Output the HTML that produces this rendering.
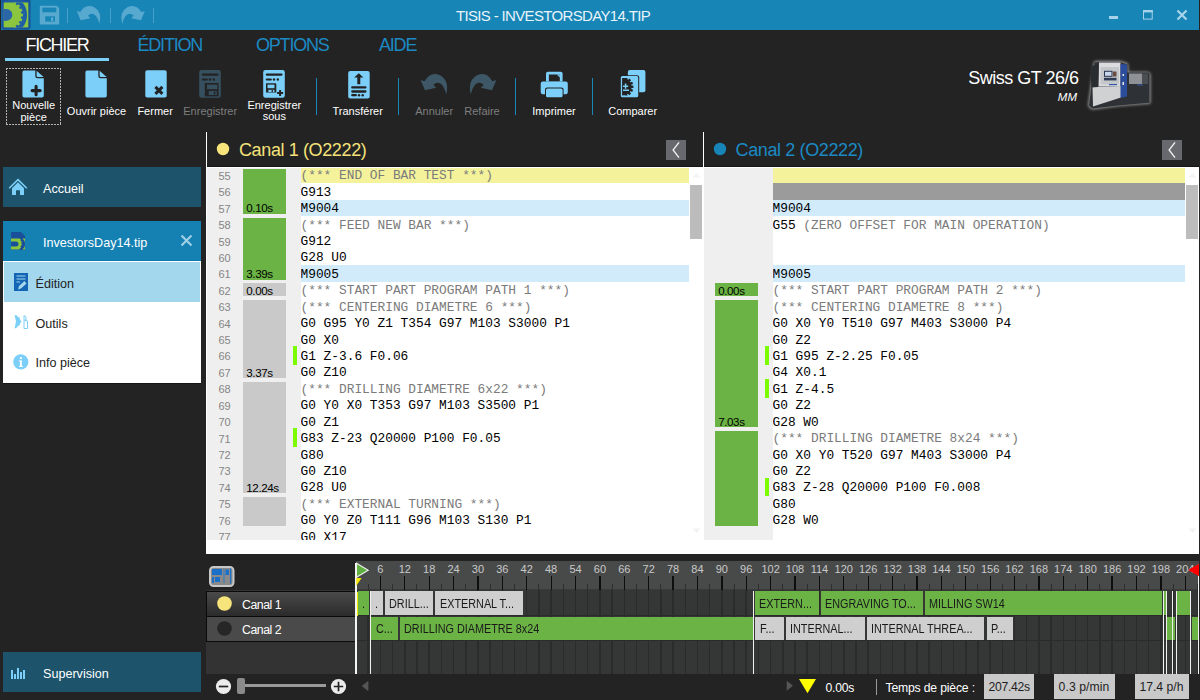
<!DOCTYPE html>
<html><head><meta charset="utf-8"><style>
html,body{margin:0;padding:0;}
body{width:1200px;height:700px;overflow:hidden;background:#232323;position:relative;font-family:'Liberation Sans', sans-serif;}
body>div{position:absolute;}
</style></head><body>
<div style="left:0px;top:0px;width:1200px;height:30px;background:#1785b6;"></div>
<div style="left:0px;top:0px;width:1px;height:30px;background:#232323;"></div>
<svg style="position:absolute;left:0px;top:0px;" width="32" height="30" viewBox="0 0 32 30">
<defs><radialGradient id="lg" cx="0.45" cy="0.5" r="0.6"><stop offset="0" stop-color="#2f6fb3"/><stop offset="1" stop-color="#17539a"/></radialGradient>
<clipPath id="lc"><rect x="3.7" y="2.5" width="24.6" height="24.9"/></clipPath></defs>
<rect x="1.4" y="-2" width="29.2" height="31.7" rx="3.5" fill="url(#lg)"/>
<rect x="3.7" y="2.5" width="24.6" height="24.9" fill="#8cc63f"/>
<g clip-path="url(#lc)">
<circle cx="7.7" cy="15" r="16.4" fill="none" stroke="#1f5fa4" stroke-width="5.9"/>
<rect x="12.8" y="-1.4" width="2.4" height="2.8" fill="#8cc63f" transform="translate(7.7 15) rotate(-60)"/><rect x="12.8" y="-1.4" width="2.4" height="2.8" fill="#8cc63f" transform="translate(7.7 15) rotate(-40)"/><rect x="12.8" y="-1.4" width="2.4" height="2.8" fill="#8cc63f" transform="translate(7.7 15) rotate(-20)"/><rect x="12.8" y="-1.4" width="2.4" height="2.8" fill="#8cc63f" transform="translate(7.7 15) rotate(0)"/><rect x="12.8" y="-1.4" width="2.4" height="2.8" fill="#8cc63f" transform="translate(7.7 15) rotate(20)"/><rect x="12.8" y="-1.4" width="2.4" height="2.8" fill="#8cc63f" transform="translate(7.7 15) rotate(40)"/><rect x="12.8" y="-1.4" width="2.4" height="2.8" fill="#8cc63f" transform="translate(7.7 15) rotate(60)"/>
<rect x="0" y="9.1" width="6.5" height="11.7" fill="#2a66a8"/><circle cx="6.5" cy="14.95" r="5.85" fill="#2a66a8"/>
</g>
</svg>
<svg style="position:absolute;left:39px;top:5px;" width="22" height="20" viewBox="0 0 22 20">
<path d="M1.4 1.4 H17.6 L19.6 3.4 V18.9 H1.4 Z" fill="#58a9cf" stroke="#58a9cf" stroke-width="1.2" stroke-linejoin="round"/>
<rect x="3.3" y="2.6" width="14" height="4.7" fill="#1785b6"/>
<rect x="6.2" y="11.3" width="9.8" height="5.3" fill="#1785b6"/>
<rect x="12" y="12.5" width="2.3" height="3.5" fill="#58a9cf"/></svg>
<div style="left:67.2px;top:8.2px;width:1px;height:14.5px;background:#4a9fc8;"></div>
<div style="left:110.2px;top:8.2px;width:1px;height:14.5px;background:#4a9fc8;"></div>
<div style="left:153.2px;top:8.2px;width:1px;height:14.5px;background:#4a9fc8;"></div>
<svg style="position:absolute;left:0px;top:0px;" width="200" height="30" viewBox="0 0 200 30"><path d="M32.2 26.5 Q36 13 26 7 Q16.5 2.6 10.6 12.8 L6.6 11.5 L11 22.3 L22.2 19.8 L19.3 17 Q22.5 13.3 26.8 15.8 Q30.5 19 32.2 26.5 Z" fill="#58a9cf" transform="translate(70.9 1.1) scale(0.885 0.86)"/><path d="M32.2 26.5 Q36 13 26 7 Q16.5 2.6 10.6 12.8 L6.6 11.5 L11 22.3 L22.2 19.8 L19.3 17 Q22.5 13.3 26.8 15.8 Q30.5 19 32.2 26.5 Z" fill="#58a9cf" transform="translate(150.7 1.1) scale(-0.885 0.86)"/></svg>
<div style="left:456.00px;top:8.25px;font-size:15px;line-height:15px;color:#e8f4fa;font-family:'Liberation Sans', sans-serif;white-space:pre;letter-spacing:-0.66px">TISIS - INVESTORSDAY14.TIP</div>
<div style="left:1108.8px;top:16px;width:9.2px;height:3px;background:#a6d3ea;"></div>
<svg style="position:absolute;left:1142px;top:9px;" width="12" height="11" viewBox="0 0 12 11"><rect x="1.5" y="1.5" width="8.7" height="8.6" fill="none" stroke="#a6d3ea" stroke-width="1"/><rect x="1" y="1" width="9.7" height="2.4" fill="#a6d3ea"/></svg>
<svg style="position:absolute;left:1176px;top:9px;" width="12" height="12" viewBox="0 0 12 12"><path d="M1.5 1.5 L10.5 10.5 M10.5 1.5 L1.5 10.5" stroke="#a6d3ea" stroke-width="2.3"/></svg>
<div style="left:25.50px;top:35.70px;font-size:18px;line-height:18px;color:#ffffff;font-family:'Liberation Sans', sans-serif;white-space:pre;letter-spacing:-1.3px">FICHIER</div>
<div style="left:5px;top:58px;width:104px;height:3px;background:#7ccff6;"></div>
<div style="left:137.50px;top:35.70px;font-size:18px;line-height:18px;color:#1b8ac4;font-family:'Liberation Sans', sans-serif;white-space:pre;letter-spacing:-1.2px">ÉDITION</div>
<div style="left:256.00px;top:35.70px;font-size:18px;line-height:18px;color:#1b8ac4;font-family:'Liberation Sans', sans-serif;white-space:pre;letter-spacing:-1.2px">OPTIONS</div>
<div style="left:379.00px;top:35.70px;font-size:18px;line-height:18px;color:#1b8ac4;font-family:'Liberation Sans', sans-serif;white-space:pre;letter-spacing:-1.2px">AIDE</div>
<div style="left:6px;top:68px;width:55px;height:1px;background:repeating-linear-gradient(90deg,#b4b4b4 0 2px,transparent 2px 3px);"></div>
<div style="left:6px;top:124px;width:55px;height:1px;background:repeating-linear-gradient(90deg,#b4b4b4 0 2px,transparent 2px 3px);"></div>
<div style="left:6px;top:68px;width:1px;height:57px;background:repeating-linear-gradient(180deg,#b4b4b4 0 2px,transparent 2px 3px);"></div>
<div style="left:60px;top:68px;width:1px;height:57px;background:repeating-linear-gradient(180deg,#b4b4b4 0 2px,transparent 2px 3px);"></div>
<svg style="position:absolute;left:22.3px;top:70.4px;" width="23" height="29" viewBox="0 0 23 29">
<path d="M2 0.5 H13.3 V6 Q13.3 8.3 15.6 8.3 H21.8 V25.8 Q21.8 27.6 20 27.6 H2.2 Q0.4 27.6 0.4 25.8 V2.3 Q0.4 0.5 2 0.5 Z" fill="#7ccff8"/>
<path d="M14.6 0.8 L21.6 7 H15.8 Q14.6 7 14.6 5.8 Z" fill="#7ccff8"/></svg>
<svg style="position:absolute;left:22.3px;top:70.4px;" width="23" height="29" viewBox="0 0 23 29"><path d="M10.1 20.6 H18.2 M14.1 16.4 V24.7" stroke="#232323" stroke-width="3.1" stroke-linecap="round"/></svg>
<svg style="position:absolute;left:85.3px;top:70.4px;" width="23" height="29" viewBox="0 0 23 29">
<path d="M2 0.5 H13.3 V6 Q13.3 8.3 15.6 8.3 H21.8 V25.8 Q21.8 27.6 20 27.6 H2.2 Q0.4 27.6 0.4 25.8 V2.3 Q0.4 0.5 2 0.5 Z" fill="#7ccff8"/>
<path d="M14.6 0.8 L21.6 7 H15.8 Q14.6 7 14.6 5.8 Z" fill="#7ccff8"/></svg>
<svg style="position:absolute;left:144.5px;top:70.4px;" width="23" height="29" viewBox="0 0 23 29"><rect x="0.3" y="0.2" width="21.4" height="27.3" rx="1.8" fill="#7ccff8"/>
<path d="M10.4 16.9 L17.4 23.9 M17.4 16.9 L10.4 23.9" stroke="#232323" stroke-width="3"/></svg>
<svg style="position:absolute;left:199px;top:70.1px;" width="23" height="29" viewBox="0 0 23 29"><rect x="0.2" y="0" width="21.6" height="27.8" rx="2.2" fill="#36505f"/>
<path d="M3.8 4.6 H18.5" stroke="#232323" stroke-width="2.2" stroke-linecap="round"/>
<path d="M3.8 9.5 H7.8" stroke="#232323" stroke-width="2.2" stroke-linecap="round"/>
<circle cx="11" cy="9.5" r="1.2" fill="#232323"/><circle cx="14.8" cy="9.5" r="1.2" fill="#232323"/><path d="M5.8 13 H19.6 V26.4 H5.8 Z" fill="#232323"/>
<rect x="8" y="14.6" width="10.3" height="4.6" fill="#36505f"/>
<rect x="9.8" y="21" width="8" height="4" fill="#36505f"/>
<rect x="14.8" y="21.6" width="1.6" height="2.8" fill="#232323"/></svg>
<svg style="position:absolute;left:263px;top:70.1px;" width="23" height="29" viewBox="0 0 23 29"><rect x="0.2" y="0" width="21.6" height="27.8" rx="2.2" fill="#7ccff8"/>
<path d="M3.8 4.6 H18.5" stroke="#232323" stroke-width="2.2" stroke-linecap="round"/>
<path d="M3.8 9.5 H7.8" stroke="#232323" stroke-width="2.2" stroke-linecap="round"/>
<circle cx="11" cy="9.5" r="1.2" fill="#232323"/><circle cx="14.8" cy="9.5" r="1.2" fill="#232323"/><path d="M3 13.2 H12.6 L13.3 14 V22.6 H3 Z" fill="#232323"/>
<rect x="4.5" y="14.6" width="7" height="3.6" fill="#7ccff8"/>
<rect x="5.4" y="19.8" width="6" height="2.2" fill="#7ccff8"/>
<rect x="8.6" y="19.8" width="1.3" height="2.2" fill="#232323"/>
<path d="M17.1 19.9 V25.9 M14.1 22.9 H20.1" stroke="#232323" stroke-width="2"/></svg>
<div style="left:316px;top:78px;width:1px;height:37px;background:#1b87b7;"></div>
<div style="left:398px;top:78px;width:1px;height:37px;background:#1b87b7;"></div>
<div style="left:515px;top:78px;width:1px;height:37px;background:#1b87b7;"></div>
<div style="left:592px;top:78px;width:1px;height:37px;background:#1b87b7;"></div>
<svg style="position:absolute;left:347.6px;top:70.5px;" width="23" height="29" viewBox="0 0 23 29"><rect x="0.2" y="0.1" width="21.5" height="27.4" rx="2" fill="#7ccff8"/>
<path d="M10.8 2.3 L15.4 6.4 H12.3 V13.2 H9.3 V6.4 H6.2 Z" fill="#232323"/>
<path d="M4.3 16.4 H17.4 M4.3 20.5 H17.4" stroke="#232323" stroke-width="2.3" stroke-linecap="round"/>
<path d="M4.3 24.2 H7.8" stroke="#232323" stroke-width="2.2" stroke-linecap="round"/>
<circle cx="11" cy="24.2" r="1.2" fill="#232323"/><circle cx="14.7" cy="24.2" r="1.2" fill="#232323"/></svg>
<svg style="position:absolute;left:414px;top:68px;" width="40" height="32" viewBox="0 0 40 32"><path d="M32.2 26.5 Q35.8 13 26 7.3 Q16.5 3 10.6 13.3 L6.6 12 L11 22.3 L22.2 19.8 L19.3 17 Q22.5 13.3 26.8 15.8 Q30.5 19 32.2 26.5 Z" fill="#3d5766"/></svg>
<svg style="position:absolute;left:462.8px;top:68px;" width="40" height="32" viewBox="0 0 40 32"><path d="M32.2 26.5 Q35.8 13 26 7.3 Q16.5 3 10.6 13.3 L6.6 12 L11 22.3 L22.2 19.8 L19.3 17 Q22.5 13.3 26.8 15.8 Q30.5 19 32.2 26.5 Z" fill="#3d5766" transform="translate(40 0) scale(-1 1)"/></svg>
<svg style="position:absolute;left:536px;top:66px;" width="36" height="34" viewBox="0 0 36 34"><path d="M10 15.5 V7.6 Q10 5.7 11.9 5.7 H24.7 Q26.6 5.7 26.6 7.6 V15.5 Z" fill="#7ccff8"/>
<rect x="12.9" y="8.5" width="10.9" height="7" fill="#232323"/>
<path d="M20.8 8.5 H23.8 V11.5 Z" fill="#7ccff8"/>
<rect x="4.7" y="15.6" width="27.1" height="12.6" rx="2.2" fill="#7ccff8"/>
<rect x="9" y="21.4" width="18.6" height="10.5" rx="2.2" fill="#232323"/>
<rect x="10" y="22.4" width="16.6" height="8.9" rx="1.6" fill="#7ccff8"/></svg>
<svg style="position:absolute;left:616px;top:66px;" width="36" height="34" viewBox="0 0 36 34"><rect x="11.9" y="4.1" width="17.5" height="22.1" rx="1.8" fill="#7ccff8"/>
<rect x="3.8" y="9.2" width="19.4" height="23" rx="2.2" fill="#232323"/>
<rect x="4.8" y="10.1" width="17.4" height="21.2" rx="1.6" fill="#7ccff8"/>
<clipPath id="cpc"><rect x="6.1" y="11.9" width="12.5" height="17.7"/></clipPath>
<g clip-path="url(#cpc)"><circle cx="6.8" cy="20.8" r="8.9" fill="#232323"/><rect x="-1.2" y="-10.6" width="2.4" height="2.4" transform="translate(6.8 20.8) rotate(22)" fill="#232323"/><rect x="-1.2" y="-10.6" width="2.4" height="2.4" transform="translate(6.8 20.8) rotate(45)" fill="#232323"/><rect x="-1.2" y="-10.6" width="2.4" height="2.4" transform="translate(6.8 20.8) rotate(68)" fill="#232323"/><rect x="-1.2" y="-10.6" width="2.4" height="2.4" transform="translate(6.8 20.8) rotate(90)" fill="#232323"/><rect x="-1.2" y="-10.6" width="2.4" height="2.4" transform="translate(6.8 20.8) rotate(112)" fill="#232323"/><rect x="-1.2" y="-10.6" width="2.4" height="2.4" transform="translate(6.8 20.8) rotate(135)" fill="#232323"/><rect x="-1.2" y="-10.6" width="2.4" height="2.4" transform="translate(6.8 20.8) rotate(158)" fill="#232323"/></g>
<path d="M9.6 17.6 V22.8 M7 20.2 H12.2 M7 24.2 H13" stroke="#7ccff8" stroke-width="1.5"/></svg>
<div style="left:-166.40px;width:400px;top:99.85px;font-size:11px;line-height:11px;color:#ffffff;font-family:'Liberation Sans', sans-serif;white-space:pre;text-align:center;">Nouvelle</div>
<div style="left:-166.40px;width:400px;top:111.85px;font-size:11px;line-height:11px;color:#ffffff;font-family:'Liberation Sans', sans-serif;white-space:pre;text-align:center;">pièce</div>
<div style="left:-103.50px;width:400px;top:106.05px;font-size:11px;line-height:11px;color:#ffffff;font-family:'Liberation Sans', sans-serif;white-space:pre;text-align:center;">Ouvrir pièce</div>
<div style="left:-44.90px;width:400px;top:106.05px;font-size:11px;line-height:11px;color:#ffffff;font-family:'Liberation Sans', sans-serif;white-space:pre;text-align:center;">Fermer</div>
<div style="left:10.20px;width:400px;top:106.05px;font-size:11px;line-height:11px;color:#7f7f7f;font-family:'Liberation Sans', sans-serif;white-space:pre;text-align:center;">Enregistrer</div>
<div style="left:74.30px;width:400px;top:99.85px;font-size:11px;line-height:11px;color:#ffffff;font-family:'Liberation Sans', sans-serif;white-space:pre;text-align:center;">Enregistrer</div>
<div style="left:74.30px;width:400px;top:110.85px;font-size:11px;line-height:11px;color:#ffffff;font-family:'Liberation Sans', sans-serif;white-space:pre;text-align:center;">sous</div>
<div style="left:157.70px;width:400px;top:106.05px;font-size:11px;line-height:11px;color:#ffffff;font-family:'Liberation Sans', sans-serif;white-space:pre;text-align:center;">Transférer</div>
<div style="left:234.20px;width:400px;top:106.05px;font-size:11px;line-height:11px;color:#7f7f7f;font-family:'Liberation Sans', sans-serif;white-space:pre;text-align:center;">Annuler</div>
<div style="left:282.00px;width:400px;top:106.05px;font-size:11px;line-height:11px;color:#7f7f7f;font-family:'Liberation Sans', sans-serif;white-space:pre;text-align:center;">Refaire</div>
<div style="left:354.00px;width:400px;top:106.05px;font-size:11px;line-height:11px;color:#ffffff;font-family:'Liberation Sans', sans-serif;white-space:pre;text-align:center;">Imprimer</div>
<div style="left:432.70px;width:400px;top:106.05px;font-size:11px;line-height:11px;color:#ffffff;font-family:'Liberation Sans', sans-serif;white-space:pre;text-align:center;">Comparer</div>
<div style="right:121.50px;top:69.10px;font-size:18px;line-height:18px;color:#ffffff;font-family:'Liberation Sans', sans-serif;white-space:pre;text-align:right;letter-spacing:-0.5px">Swiss GT 26/6</div>
<div style="right:123.00px;top:91.52px;font-size:11.5px;line-height:11.5px;color:#ffffff;font-family:'Liberation Sans', sans-serif;white-space:pre;text-align:right;font-style:italic">MM</div>
<svg style="position:absolute;left:1082px;top:56px;" width="74" height="58" viewBox="0 0 74 58">
<defs><filter id="gl" x="-30%" y="-30%" width="160%" height="160%"><feGaussianBlur stdDeviation="1.6"/></filter></defs>
<path d="M12 5.5 L16 5 H38.5 L46 7.5 L46.5 16 L66 16 L68.5 18 V47.5 L37 50 L10 53.5 L6 50 Z" fill="#ffffff" opacity="0.55" filter="url(#gl)"/>
<path d="M12.5 6.5 L16.5 6 H38 L45.5 8.5 V16.5 H66 L67.5 18 V46.8 L36 49.5 L10.5 52.5 L7 49.5 Z" fill="#2e3135"/>
<path d="M17 6.5 H38.5 V30 L16.5 30.5 Z" fill="#dadcde"/>
<path d="M18.5 11 H37 V28.5 H18.5 Z" fill="#c4c7ca"/>
<rect x="22" y="14.8" width="8.5" height="6" fill="#2a3550"/>
<rect x="23" y="15.8" width="6.5" height="4" fill="#c9d6ec"/>
<rect x="31" y="15.5" width="3.5" height="5" fill="#6b4a44"/>
<rect x="22" y="21.8" width="12.5" height="2.6" fill="#2f3a55"/>
<rect x="27" y="28" width="8" height="1.2" fill="#3656a8"/>
<path d="M10.5 31 L39 30 V41.5 L11 50.5 Z" fill="#cfd1d3"/>
<path d="M8 11 L16.5 7.5 L16 31 L9.5 31.5 Z" fill="#2a2d30"/>
<path d="M38.5 8 L45 8.5 V40.5 L38.5 42 Z" fill="#2c4c9c"/>
<rect x="40.5" y="18" width="1.5" height="2" fill="#e8e8e8"/><rect x="40.5" y="26" width="1.5" height="3" fill="#e8e8e8"/>
<rect x="47" y="17.5" width="13" height="10.5" fill="#8e9296"/>
<rect x="60" y="17.5" width="6" height="10.5" fill="#4a4d52"/>
<rect x="55" y="28.5" width="6" height="1" fill="#3656a8"/>
</svg>
<div style="left:3px;top:167px;width:198px;height:40px;background:#1d536b;"></div>
<svg style="position:absolute;left:8px;top:177px;" width="22" height="20" viewBox="0 0 22 20"><path d="M1.2 11.2 L10 2.6 L18.8 11.2" fill="none" stroke="#7ccff8" stroke-width="1.6"/>
<path d="M4 11.3 L10 5.2 L16 11.3 V18 H12 V13.3 H8 V18 H4 Z" fill="#7ccff8"/></svg>
<div style="left:43.00px;top:183.09px;font-size:12.6px;line-height:12.6px;color:#ffffff;font-family:'Liberation Sans', sans-serif;white-space:pre;">Accueil</div>
<div style="left:3px;top:221px;width:198px;height:40px;background:#1581b3;"></div>
<div style="left:3px;top:260px;width:198px;height:1px;background:#0f78b0;"></div>
<svg style="position:absolute;left:11px;top:232px;" width="15" height="19" viewBox="0 0 15 19"><path d="M0 0 H10 L14 4 V18 H0 Z" fill="#1a4f9a"/>
<path d="M0 6.5 H8.5 V17.5 H0 V14.5 H5 A2.5 2.5 0 0 0 5 9.5 H0 Z" fill="#8cc63f"/>
<path d="M8 6.5 L10 7.5 L9.5 9 L11 10 L10.2 11.5 L11 13 L9.5 14 L10 15.8 L8 17 Z" fill="#8cc63f"/>
<path d="M11.5 6.5 H14 V17.5 H11.5 A7 7 0 0 0 11.5 6.5 Z" fill="#8cc63f"/></svg>
<div style="left:43.00px;top:237.29px;font-size:12.6px;line-height:12.6px;color:#ffffff;font-family:'Liberation Sans', sans-serif;white-space:pre;">InvestorsDay14.tip</div>
<svg style="position:absolute;left:180px;top:234px;" width="13" height="13" viewBox="0 0 13 13"><path d="M1.5 1.5 L11.5 11.5 M11.5 1.5 L1.5 11.5" stroke="#9fcfe6" stroke-width="2.2"/></svg>
<div style="left:3px;top:261px;width:198px;height:122px;background:#ffffff;"></div>
<div style="left:3px;top:383px;width:198px;height:1px;background:#151515;"></div>
<div style="left:4px;top:262px;width:196px;height:40px;background:#a2d7ee;"></div>
<svg style="position:absolute;left:14px;top:273px;" width="14" height="18" viewBox="0 0 14 18"><rect x="0" y="0" width="14" height="18" fill="#1565b5"/>
<path d="M2.5 3 H11.5 M2.5 6 H11.5 M2.5 9 H6" stroke="#a2d7ee" stroke-width="1.2"/>
<path d="M4 16.5 L5 13 L10.5 8 L12.5 10.5 L7 15.5 Z" fill="#a2d7ee"/></svg>
<div style="left:35.50px;top:277.79px;font-size:12.6px;line-height:12.6px;color:#222222;font-family:'Liberation Sans', sans-serif;white-space:pre;">Édition</div>
<svg style="position:absolute;left:13px;top:314px;" width="18" height="16" viewBox="0 0 18 16"><path d="M1.5 1 L4 1.5 L5 3 L6.5 3.5 L7 5.5 L8.5 7.5 L7 9.5 L6.5 11.5 L5 12 L4 13.5 L1.5 14.5 L3 7.5 Z" fill="#7ccff8"/>
<path d="M11 1.5 L13 3 V6 L14.5 7 V14.5 H11 Z" fill="none" stroke="#7ccff8" stroke-width="1"/>
<rect x="11.5" y="5.5" width="1.5" height="1.8" fill="#7ccff8"/></svg>
<div style="left:35.50px;top:317.59px;font-size:12.6px;line-height:12.6px;color:#222222;font-family:'Liberation Sans', sans-serif;white-space:pre;">Outils</div>
<svg style="position:absolute;left:13px;top:354px;" width="16" height="16" viewBox="0 0 16 16"><circle cx="7.8" cy="7.8" r="7.6" fill="#7ccff8"/>
<rect x="6.9" y="6.4" width="1.9" height="6.4" fill="#ffffff"/><rect x="5.9" y="6.4" width="1.2" height="1" fill="#ffffff"/><rect x="6" y="11.9" width="4" height="1" fill="#ffffff"/><rect x="6.9" y="3.2" width="1.9" height="1.9" fill="#ffffff"/></svg>
<div style="left:35.50px;top:356.69px;font-size:12.6px;line-height:12.6px;color:#222222;font-family:'Liberation Sans', sans-serif;white-space:pre;">Info pièce</div>
<div style="left:3px;top:652px;width:198px;height:40px;background:#1d536b;"></div>
<svg style="position:absolute;left:10px;top:664px;" width="16" height="16" viewBox="0 0 16 16"><path d="M2 6 V15 M5 10 V15 M8 4 V15 M11 8 V15 M14 6 V15" stroke="#7ccff8" stroke-width="2"/></svg>
<div style="left:43.00px;top:668.09px;font-size:12.6px;line-height:12.6px;color:#ffffff;font-family:'Liberation Sans', sans-serif;white-space:pre;">Supervision</div>
<div style="left:206px;top:132px;width:1px;height:422px;background:#ffffff;"></div>
<div style="left:703px;top:132px;width:1px;height:422px;background:#ffffff;"></div>
<div style="left:207px;top:166px;width:496px;height:1px;background:#151515;"></div>
<div style="left:704px;top:166px;width:496px;height:1px;background:#151515;"></div>
<div style="left:206px;top:167px;width:994px;height:1px;background:#ffffff;"></div>
<svg style="position:absolute;left:216px;top:142px;" width="14" height="14" viewBox="0 0 14 14"><circle cx="7" cy="7" r="6.2" fill="#f7e57c"/></svg>
<div style="left:239.00px;top:141.10px;font-size:18px;line-height:18px;color:#f5e27a;font-family:'Liberation Sans', sans-serif;white-space:pre;letter-spacing:-0.38px">Canal 1 (O2222)</div>
<svg style="position:absolute;left:713px;top:142px;" width="14" height="14" viewBox="0 0 14 14"><circle cx="7" cy="7" r="6.2" fill="#1785b8"/></svg>
<div style="left:735.60px;top:141.10px;font-size:18px;line-height:18px;color:#1b8ac4;font-family:'Liberation Sans', sans-serif;white-space:pre;letter-spacing:-0.38px">Canal 2 (O2222)</div>
<svg style="position:absolute;left:666px;top:140px;" width="20" height="20" viewBox="0 0 20 20"><rect width="20" height="20" fill="#68686f"/><path d="M13 2.3 L7.1 10 L13 17.7" fill="none" stroke="#f4f4f4" stroke-width="1.3"/></svg>
<svg style="position:absolute;left:1162px;top:140px;" width="20" height="20" viewBox="0 0 20 20"><rect width="20" height="20" fill="#68686f"/><path d="M13 2.3 L7.1 10 L13 17.7" fill="none" stroke="#f4f4f4" stroke-width="1.3"/></svg>
<div style="left:207px;top:168px;width:496px;height:372px;background:#efefef;"></div>
<div style="left:301px;top:168px;width:402px;height:372px;background:#ffffff;"></div>
<div style="left:206px;top:540px;width:994px;height:14px;background:#ffffff;"></div>
<div style="left:704px;top:168px;width:496px;height:372px;background:#efefef;"></div>
<div style="left:773px;top:168px;width:427px;height:372px;background:#ffffff;"></div>
<div style="left:1199px;top:132px;width:1px;height:422px;background:#2a2a2a;"></div>
<div style="left:301px;top:168px;width:388px;height:15.18px;background:#f4f39b;"></div>
<div style="left:301px;top:199.6px;width:388px;height:16.42px;background:#d1ebfb;"></div>
<div style="left:301px;top:265.28px;width:388px;height:16.42px;background:#d1ebfb;"></div>
<div style="left:773px;top:168px;width:412px;height:15.18px;background:#f4f39b;"></div>
<div style="left:773px;top:183.18px;width:412px;height:16.42px;background:#9b9b9b;"></div>
<div style="left:773px;top:199.6px;width:412px;height:16.42px;background:#d1ebfb;"></div>
<div style="left:773px;top:265.28px;width:412px;height:16.42px;background:#d1ebfb;"></div>
<div style="left:690px;top:185px;width:12px;height:54px;background:#bcbcbc;"></div>
<div style="left:1186px;top:185px;width:12px;height:54px;background:#bcbcbc;"></div>
<svg style="position:absolute;left:692px;top:172px;" width="9" height="6" viewBox="0 0 9 6"><path d="M0.5 5.5 L4.5 1 L8.5 5.5 Z" fill="#f3f3f3"/></svg>
<svg style="position:absolute;left:1188px;top:172px;" width="9" height="6" viewBox="0 0 9 6"><path d="M0.5 5.5 L4.5 1 L8.5 5.5 Z" fill="#f3f3f3"/></svg>
<svg style="position:absolute;left:692px;top:528px;" width="9" height="6" viewBox="0 0 9 6"><path d="M0.5 0.5 L4.5 5 L8.5 0.5 Z" fill="#f2f2f2"/></svg>
<svg style="position:absolute;left:1188px;top:528px;" width="9" height="6" viewBox="0 0 9 6"><path d="M0.5 0.5 L4.5 5 L8.5 0.5 Z" fill="#f2f2f2"/></svg>
<div style="left:242.7px;top:168.5px;width:43.7px;height:45.36px;background:#6ab344;"></div>
<div style="left:246.30px;top:202.48px;font-size:11.6px;line-height:11.6px;color:#000000;font-family:'Liberation Sans', sans-serif;white-space:pre;letter-spacing:-0.4px">0.10s</div>
<div style="left:242.7px;top:217.76px;width:43.7px;height:61.78px;background:#6ab344;"></div>
<div style="left:246.30px;top:268.16px;font-size:11.6px;line-height:11.6px;color:#000000;font-family:'Liberation Sans', sans-serif;white-space:pre;letter-spacing:-0.4px">3.39s</div>
<div style="left:242.7px;top:283.44px;width:43.7px;height:12.52px;background:#c9c9c9;"></div>
<div style="left:246.30px;top:284.58px;font-size:11.6px;line-height:11.6px;color:#000000;font-family:'Liberation Sans', sans-serif;white-space:pre;letter-spacing:-0.4px">0.00s</div>
<div style="left:242.7px;top:299.86px;width:43.7px;height:78.2px;background:#c9c9c9;"></div>
<div style="left:246.30px;top:366.68px;font-size:11.6px;line-height:11.6px;color:#000000;font-family:'Liberation Sans', sans-serif;white-space:pre;letter-spacing:-0.4px">3.37s</div>
<div style="left:242.7px;top:381.96px;width:43.7px;height:111.04px;background:#c9c9c9;"></div>
<div style="left:246.30px;top:481.62px;font-size:11.6px;line-height:11.6px;color:#000000;font-family:'Liberation Sans', sans-serif;white-space:pre;letter-spacing:-0.4px">12.24s</div>
<div style="left:242.7px;top:496.9px;width:43.7px;height:28.94px;background:#c9c9c9;"></div>
<div style="left:714.6px;top:283.44px;width:43.7px;height:12.52px;background:#6ab344;"></div>
<div style="left:718.20px;top:284.58px;font-size:11.6px;line-height:11.6px;color:#000000;font-family:'Liberation Sans', sans-serif;white-space:pre;letter-spacing:-0.4px">0.00s</div>
<div style="left:714.6px;top:299.86px;width:43.7px;height:127.46px;background:#6ab344;"></div>
<div style="left:718.20px;top:415.94px;font-size:11.6px;line-height:11.6px;color:#000000;font-family:'Liberation Sans', sans-serif;white-space:pre;letter-spacing:-0.4px">7.03s</div>
<div style="left:714.6px;top:431.22px;width:43.7px;height:94.62px;background:#6ab344;"></div>
<div style="left:293px;top:346.22px;width:4px;height:18.6px;background:#7cfc00;"></div>
<div style="left:293px;top:428.32px;width:4px;height:18.6px;background:#7cfc00;"></div>
<div style="left:765px;top:346.22px;width:4px;height:18.6px;background:#7cfc00;"></div>
<div style="left:765px;top:379.06px;width:4px;height:18.6px;background:#7cfc00;"></div>
<div style="left:765px;top:477.58px;width:4px;height:18.6px;background:#7cfc00;"></div>
<div style="left:207px;top:168px;width:23.7px;height:372px;overflow:hidden"><div style="position:absolute;right:0;top:2.85px;font-size:11px;line-height:11px;color:#858585">55</div><div style="position:absolute;right:0;top:19.27px;font-size:11px;line-height:11px;color:#858585">56</div><div style="position:absolute;right:0;top:35.69px;font-size:11px;line-height:11px;color:#858585">57</div><div style="position:absolute;right:0;top:52.11px;font-size:11px;line-height:11px;color:#858585">58</div><div style="position:absolute;right:0;top:68.53px;font-size:11px;line-height:11px;color:#858585">59</div><div style="position:absolute;right:0;top:84.95px;font-size:11px;line-height:11px;color:#858585">60</div><div style="position:absolute;right:0;top:101.37px;font-size:11px;line-height:11px;color:#858585">61</div><div style="position:absolute;right:0;top:117.79px;font-size:11px;line-height:11px;color:#858585">62</div><div style="position:absolute;right:0;top:134.21px;font-size:11px;line-height:11px;color:#858585">63</div><div style="position:absolute;right:0;top:150.63px;font-size:11px;line-height:11px;color:#858585">64</div><div style="position:absolute;right:0;top:167.05px;font-size:11px;line-height:11px;color:#858585">65</div><div style="position:absolute;right:0;top:183.47px;font-size:11px;line-height:11px;color:#858585">66</div><div style="position:absolute;right:0;top:199.89px;font-size:11px;line-height:11px;color:#858585">67</div><div style="position:absolute;right:0;top:216.31px;font-size:11px;line-height:11px;color:#858585">68</div><div style="position:absolute;right:0;top:232.73px;font-size:11px;line-height:11px;color:#858585">69</div><div style="position:absolute;right:0;top:249.15px;font-size:11px;line-height:11px;color:#858585">70</div><div style="position:absolute;right:0;top:265.57px;font-size:11px;line-height:11px;color:#858585">71</div><div style="position:absolute;right:0;top:281.99px;font-size:11px;line-height:11px;color:#858585">72</div><div style="position:absolute;right:0;top:298.41px;font-size:11px;line-height:11px;color:#858585">73</div><div style="position:absolute;right:0;top:314.83px;font-size:11px;line-height:11px;color:#858585">74</div><div style="position:absolute;right:0;top:331.25px;font-size:11px;line-height:11px;color:#858585">75</div><div style="position:absolute;right:0;top:347.67px;font-size:11px;line-height:11px;color:#858585">76</div><div style="position:absolute;right:0;top:364.09px;font-size:11px;line-height:11px;color:#858585">77</div></div>
<div style="left:300.5px;top:168px;width:388px;height:372px;overflow:hidden;font-family:'Liberation Mono', monospace;font-size:12.83px;line-height:12.83px;white-space:pre;"><div style="position:absolute;left:0;top:2.38px;color:#7b7b7b">(*** END OF BAR TEST ***)</div><div style="position:absolute;left:0;top:18.80px;color:#000000">G913</div><div style="position:absolute;left:0;top:35.22px;color:#000000">M9004</div><div style="position:absolute;left:0;top:51.64px;color:#7b7b7b">(*** FEED NEW BAR ***)</div><div style="position:absolute;left:0;top:68.06px;color:#000000">G912</div><div style="position:absolute;left:0;top:84.48px;color:#000000">G28 U0</div><div style="position:absolute;left:0;top:100.90px;color:#000000">M9005</div><div style="position:absolute;left:0;top:117.32px;color:#7b7b7b">(*** START PART PROGRAM PATH 1 ***)</div><div style="position:absolute;left:0;top:133.74px;color:#7b7b7b">(*** CENTERING DIAMETRE 6 ***)</div><div style="position:absolute;left:0;top:150.16px;color:#000000">G0 G95 Y0 Z1 T354 G97 M103 S3000 P1</div><div style="position:absolute;left:0;top:166.58px;color:#000000">G0 X0</div><div style="position:absolute;left:0;top:183.00px;color:#000000">G1 Z-3.6 F0.06</div><div style="position:absolute;left:0;top:199.42px;color:#000000">G0 Z10</div><div style="position:absolute;left:0;top:215.84px;color:#7b7b7b">(*** DRILLING DIAMETRE 6x22 ***)</div><div style="position:absolute;left:0;top:232.26px;color:#000000">G0 Y0 X0 T353 G97 M103 S3500 P1</div><div style="position:absolute;left:0;top:248.68px;color:#000000">G0 Z1</div><div style="position:absolute;left:0;top:265.10px;color:#000000">G83 Z-23 Q20000 P100 F0.05</div><div style="position:absolute;left:0;top:281.52px;color:#000000">G80</div><div style="position:absolute;left:0;top:297.94px;color:#000000">G0 Z10</div><div style="position:absolute;left:0;top:314.36px;color:#000000">G28 U0</div><div style="position:absolute;left:0;top:330.78px;color:#7b7b7b">(*** EXTERNAL TURNING ***)</div><div style="position:absolute;left:0;top:347.20px;color:#000000">G0 Y0 Z0 T111 G96 M103 S130 P1</div><div style="position:absolute;left:0;top:363.62px;color:#000000">G0 X17</div></div>
<div style="left:772.5px;top:168px;width:412px;height:372px;overflow:hidden;font-family:'Liberation Mono', monospace;font-size:12.83px;line-height:12.83px;white-space:pre;"><div style="position:absolute;left:0;top:35.22px;color:#000000">M9004</div><div style="position:absolute;left:0;top:51.64px;color:#000000">G55 <span style="color:#7b7b7b">(ZERO OFFSET FOR MAIN OPERATION)</span></div><div style="position:absolute;left:0;top:100.90px;color:#000000">M9005</div><div style="position:absolute;left:0;top:117.32px;color:#7b7b7b">(*** START PART PROGRAM PATH 2 ***)</div><div style="position:absolute;left:0;top:133.74px;color:#7b7b7b">(*** CENTERING DIAMETRE 8 ***)</div><div style="position:absolute;left:0;top:150.16px;color:#000000">G0 X0 Y0 T510 G97 M403 S3000 P4</div><div style="position:absolute;left:0;top:166.58px;color:#000000">G0 Z2</div><div style="position:absolute;left:0;top:183.00px;color:#000000">G1 G95 Z-2.25 F0.05</div><div style="position:absolute;left:0;top:199.42px;color:#000000">G4 X0.1</div><div style="position:absolute;left:0;top:215.84px;color:#000000">G1 Z-4.5</div><div style="position:absolute;left:0;top:232.26px;color:#000000">G0 Z2</div><div style="position:absolute;left:0;top:248.68px;color:#000000">G28 W0</div><div style="position:absolute;left:0;top:265.10px;color:#7b7b7b">(*** DRILLING DIAMETRE 8x24 ***)</div><div style="position:absolute;left:0;top:281.52px;color:#000000">G0 X0 Y0 T520 G97 M403 S3000 P4</div><div style="position:absolute;left:0;top:297.94px;color:#000000">G0 Z2</div><div style="position:absolute;left:0;top:314.36px;color:#000000">G83 Z-28 Q20000 P100 F0.008</div><div style="position:absolute;left:0;top:330.78px;color:#000000">G80</div><div style="position:absolute;left:0;top:347.20px;color:#000000">G28 W0</div></div>
<div style="left:206px;top:554px;width:994px;height:146px;background:#232323;"></div>
<div style="left:356px;top:561px;width:844px;height:29px;background:#484a4a;"></div>
<div style="left:356px;top:589px;width:844px;height:1.5px;background:#3a3a3a;"></div>
<svg style="position:absolute;left:208px;top:565px;" width="28" height="23" viewBox="0 0 28 23"><rect x="2" y="2" width="23.5" height="19" rx="3.5" fill="#8a8a8a" stroke="#c8c8c8" stroke-width="2"/>
<rect x="4" y="4" width="10" height="6" fill="#1a6fc8"/><rect x="17.5" y="4.5" width="3.5" height="5.5" fill="#1a6fc8"/>
<rect x="4" y="12" width="2" height="6" fill="#1a6fc8"/><rect x="7" y="12" width="5" height="5" fill="#1a6fc8"/>
<rect x="15" y="4" width="2" height="14" fill="#5a82a8"/><rect x="22" y="3.5" width="1.2" height="15" fill="#1a6fc8"/></svg>
<div style="left:206px;top:590px;width:994px;height:84px;background:#353736;"></div>
<div style="left:206px;top:590px;width:150px;height:84px;background:#333333;"></div>
<div style="left:356px;top:590px;width:844px;height:84px;overflow:hidden"><div style="position:absolute;left:11.44px;top:0;width:1.5px;height:84px;background:#2b2b2b"></div><div style="position:absolute;left:23.64px;top:0;width:1.5px;height:84px;background:#2b2b2b"></div><div style="position:absolute;left:35.83px;top:0;width:1.5px;height:84px;background:#2b2b2b"></div><div style="position:absolute;left:48.03px;top:0;width:1.5px;height:84px;background:#2b2b2b"></div><div style="position:absolute;left:60.23px;top:0;width:1.5px;height:84px;background:#2b2b2b"></div><div style="position:absolute;left:72.42px;top:0;width:1.5px;height:84px;background:#2b2b2b"></div><div style="position:absolute;left:84.62px;top:0;width:1.5px;height:84px;background:#2b2b2b"></div><div style="position:absolute;left:96.81px;top:0;width:1.5px;height:84px;background:#2b2b2b"></div><div style="position:absolute;left:109.00px;top:0;width:1.5px;height:84px;background:#2b2b2b"></div><div style="position:absolute;left:121.20px;top:0;width:1.5px;height:84px;background:#2b2b2b"></div><div style="position:absolute;left:133.39px;top:0;width:1.5px;height:84px;background:#2b2b2b"></div><div style="position:absolute;left:145.59px;top:0;width:1.5px;height:84px;background:#2b2b2b"></div><div style="position:absolute;left:157.79px;top:0;width:1.5px;height:84px;background:#2b2b2b"></div><div style="position:absolute;left:169.98px;top:0;width:1.5px;height:84px;background:#2b2b2b"></div><div style="position:absolute;left:182.17px;top:0;width:1.5px;height:84px;background:#2b2b2b"></div><div style="position:absolute;left:194.37px;top:0;width:1.5px;height:84px;background:#2b2b2b"></div><div style="position:absolute;left:206.57px;top:0;width:1.5px;height:84px;background:#2b2b2b"></div><div style="position:absolute;left:218.76px;top:0;width:1.5px;height:84px;background:#2b2b2b"></div><div style="position:absolute;left:230.96px;top:0;width:1.5px;height:84px;background:#2b2b2b"></div><div style="position:absolute;left:243.15px;top:0;width:1.5px;height:84px;background:#2b2b2b"></div><div style="position:absolute;left:255.35px;top:0;width:1.5px;height:84px;background:#2b2b2b"></div><div style="position:absolute;left:267.54px;top:0;width:1.5px;height:84px;background:#2b2b2b"></div><div style="position:absolute;left:279.74px;top:0;width:1.5px;height:84px;background:#2b2b2b"></div><div style="position:absolute;left:291.93px;top:0;width:1.5px;height:84px;background:#2b2b2b"></div><div style="position:absolute;left:304.12px;top:0;width:1.5px;height:84px;background:#2b2b2b"></div><div style="position:absolute;left:316.32px;top:0;width:1.5px;height:84px;background:#2b2b2b"></div><div style="position:absolute;left:328.52px;top:0;width:1.5px;height:84px;background:#2b2b2b"></div><div style="position:absolute;left:340.71px;top:0;width:1.5px;height:84px;background:#2b2b2b"></div><div style="position:absolute;left:352.90px;top:0;width:1.5px;height:84px;background:#2b2b2b"></div><div style="position:absolute;left:365.10px;top:0;width:1.5px;height:84px;background:#2b2b2b"></div><div style="position:absolute;left:377.30px;top:0;width:1.5px;height:84px;background:#2b2b2b"></div><div style="position:absolute;left:389.49px;top:0;width:1.5px;height:84px;background:#2b2b2b"></div><div style="position:absolute;left:401.69px;top:0;width:1.5px;height:84px;background:#2b2b2b"></div><div style="position:absolute;left:413.88px;top:0;width:1.5px;height:84px;background:#2b2b2b"></div><div style="position:absolute;left:426.08px;top:0;width:1.5px;height:84px;background:#2b2b2b"></div><div style="position:absolute;left:438.27px;top:0;width:1.5px;height:84px;background:#2b2b2b"></div><div style="position:absolute;left:450.47px;top:0;width:1.5px;height:84px;background:#2b2b2b"></div><div style="position:absolute;left:462.66px;top:0;width:1.5px;height:84px;background:#2b2b2b"></div><div style="position:absolute;left:474.86px;top:0;width:1.5px;height:84px;background:#2b2b2b"></div><div style="position:absolute;left:487.05px;top:0;width:1.5px;height:84px;background:#2b2b2b"></div><div style="position:absolute;left:499.25px;top:0;width:1.5px;height:84px;background:#2b2b2b"></div><div style="position:absolute;left:511.44px;top:0;width:1.5px;height:84px;background:#2b2b2b"></div><div style="position:absolute;left:523.64px;top:0;width:1.5px;height:84px;background:#2b2b2b"></div><div style="position:absolute;left:535.83px;top:0;width:1.5px;height:84px;background:#2b2b2b"></div><div style="position:absolute;left:548.03px;top:0;width:1.5px;height:84px;background:#2b2b2b"></div><div style="position:absolute;left:560.22px;top:0;width:1.5px;height:84px;background:#2b2b2b"></div><div style="position:absolute;left:572.42px;top:0;width:1.5px;height:84px;background:#2b2b2b"></div><div style="position:absolute;left:584.61px;top:0;width:1.5px;height:84px;background:#2b2b2b"></div><div style="position:absolute;left:596.81px;top:0;width:1.5px;height:84px;background:#2b2b2b"></div><div style="position:absolute;left:609.00px;top:0;width:1.5px;height:84px;background:#2b2b2b"></div><div style="position:absolute;left:621.20px;top:0;width:1.5px;height:84px;background:#2b2b2b"></div><div style="position:absolute;left:633.39px;top:0;width:1.5px;height:84px;background:#2b2b2b"></div><div style="position:absolute;left:645.59px;top:0;width:1.5px;height:84px;background:#2b2b2b"></div><div style="position:absolute;left:657.78px;top:0;width:1.5px;height:84px;background:#2b2b2b"></div><div style="position:absolute;left:669.97px;top:0;width:1.5px;height:84px;background:#2b2b2b"></div><div style="position:absolute;left:682.17px;top:0;width:1.5px;height:84px;background:#2b2b2b"></div><div style="position:absolute;left:694.37px;top:0;width:1.5px;height:84px;background:#2b2b2b"></div><div style="position:absolute;left:706.56px;top:0;width:1.5px;height:84px;background:#2b2b2b"></div><div style="position:absolute;left:718.76px;top:0;width:1.5px;height:84px;background:#2b2b2b"></div><div style="position:absolute;left:730.95px;top:0;width:1.5px;height:84px;background:#2b2b2b"></div><div style="position:absolute;left:743.14px;top:0;width:1.5px;height:84px;background:#2b2b2b"></div><div style="position:absolute;left:755.34px;top:0;width:1.5px;height:84px;background:#2b2b2b"></div><div style="position:absolute;left:767.54px;top:0;width:1.5px;height:84px;background:#2b2b2b"></div><div style="position:absolute;left:779.73px;top:0;width:1.5px;height:84px;background:#2b2b2b"></div><div style="position:absolute;left:791.93px;top:0;width:1.5px;height:84px;background:#2b2b2b"></div><div style="position:absolute;left:804.12px;top:0;width:1.5px;height:84px;background:#2b2b2b"></div><div style="position:absolute;left:816.32px;top:0;width:1.5px;height:84px;background:#2b2b2b"></div><div style="position:absolute;left:828.51px;top:0;width:1.5px;height:84px;background:#2b2b2b"></div><div style="position:absolute;left:840.70px;top:0;width:1.5px;height:84px;background:#2b2b2b"></div></div>
<div style="left:356px;top:615.3px;width:844px;height:1.2px;background:#2b2b2b;"></div>
<div style="left:356px;top:640.3px;width:844px;height:1.2px;background:#2b2b2b;"></div>
<div style="left:356px;top:561px;width:844px;height:29px;overflow:hidden"><div style="position:absolute;left:11.69px;top:22.5px;width:1px;height:6.5px;background:#2e2e2e"></div><div style="position:absolute;left:23.79px;top:15px;width:1.3px;height:14px;background:#0e0e0e"></div><div style="position:absolute;left:-5.61px;width:60px;text-align:center;top:2.65px;font-size:11px;line-height:11px;color:#c9c9c9">6</div><div style="position:absolute;left:36.08px;top:22.5px;width:1px;height:6.5px;background:#2e2e2e"></div><div style="position:absolute;left:48.18px;top:15px;width:1.3px;height:14px;background:#0e0e0e"></div><div style="position:absolute;left:18.78px;width:60px;text-align:center;top:2.65px;font-size:11px;line-height:11px;color:#c9c9c9">12</div><div style="position:absolute;left:60.48px;top:22.5px;width:1px;height:6.5px;background:#2e2e2e"></div><div style="position:absolute;left:72.57px;top:15px;width:1.3px;height:14px;background:#0e0e0e"></div><div style="position:absolute;left:43.17px;width:60px;text-align:center;top:2.65px;font-size:11px;line-height:11px;color:#c9c9c9">18</div><div style="position:absolute;left:84.87px;top:22.5px;width:1px;height:6.5px;background:#2e2e2e"></div><div style="position:absolute;left:96.96px;top:15px;width:1.3px;height:14px;background:#0e0e0e"></div><div style="position:absolute;left:67.56px;width:60px;text-align:center;top:2.65px;font-size:11px;line-height:11px;color:#c9c9c9">24</div><div style="position:absolute;left:109.25px;top:22.5px;width:1px;height:6.5px;background:#2e2e2e"></div><div style="position:absolute;left:121.35px;top:15px;width:1.3px;height:14px;background:#0e0e0e"></div><div style="position:absolute;left:91.95px;width:60px;text-align:center;top:2.65px;font-size:11px;line-height:11px;color:#c9c9c9">30</div><div style="position:absolute;left:133.64px;top:22.5px;width:1px;height:6.5px;background:#2e2e2e"></div><div style="position:absolute;left:145.74px;top:15px;width:1.3px;height:14px;background:#0e0e0e"></div><div style="position:absolute;left:116.34px;width:60px;text-align:center;top:2.65px;font-size:11px;line-height:11px;color:#c9c9c9">36</div><div style="position:absolute;left:158.04px;top:22.5px;width:1px;height:6.5px;background:#2e2e2e"></div><div style="position:absolute;left:170.13px;top:15px;width:1.3px;height:14px;background:#0e0e0e"></div><div style="position:absolute;left:140.73px;width:60px;text-align:center;top:2.65px;font-size:11px;line-height:11px;color:#c9c9c9">42</div><div style="position:absolute;left:182.42px;top:22.5px;width:1px;height:6.5px;background:#2e2e2e"></div><div style="position:absolute;left:194.52px;top:15px;width:1.3px;height:14px;background:#0e0e0e"></div><div style="position:absolute;left:165.12px;width:60px;text-align:center;top:2.65px;font-size:11px;line-height:11px;color:#c9c9c9">48</div><div style="position:absolute;left:206.82px;top:22.5px;width:1px;height:6.5px;background:#2e2e2e"></div><div style="position:absolute;left:218.91px;top:15px;width:1.3px;height:14px;background:#0e0e0e"></div><div style="position:absolute;left:189.51px;width:60px;text-align:center;top:2.65px;font-size:11px;line-height:11px;color:#c9c9c9">54</div><div style="position:absolute;left:231.21px;top:22.5px;width:1px;height:6.5px;background:#2e2e2e"></div><div style="position:absolute;left:243.30px;top:15px;width:1.3px;height:14px;background:#0e0e0e"></div><div style="position:absolute;left:213.90px;width:60px;text-align:center;top:2.65px;font-size:11px;line-height:11px;color:#c9c9c9">60</div><div style="position:absolute;left:255.60px;top:22.5px;width:1px;height:6.5px;background:#2e2e2e"></div><div style="position:absolute;left:267.69px;top:15px;width:1.3px;height:14px;background:#0e0e0e"></div><div style="position:absolute;left:238.29px;width:60px;text-align:center;top:2.65px;font-size:11px;line-height:11px;color:#c9c9c9">66</div><div style="position:absolute;left:279.99px;top:22.5px;width:1px;height:6.5px;background:#2e2e2e"></div><div style="position:absolute;left:292.08px;top:15px;width:1.3px;height:14px;background:#0e0e0e"></div><div style="position:absolute;left:262.68px;width:60px;text-align:center;top:2.65px;font-size:11px;line-height:11px;color:#c9c9c9">72</div><div style="position:absolute;left:304.38px;top:22.5px;width:1px;height:6.5px;background:#2e2e2e"></div><div style="position:absolute;left:316.47px;top:15px;width:1.3px;height:14px;background:#0e0e0e"></div><div style="position:absolute;left:287.07px;width:60px;text-align:center;top:2.65px;font-size:11px;line-height:11px;color:#c9c9c9">78</div><div style="position:absolute;left:328.77px;top:22.5px;width:1px;height:6.5px;background:#2e2e2e"></div><div style="position:absolute;left:340.86px;top:15px;width:1.3px;height:14px;background:#0e0e0e"></div><div style="position:absolute;left:311.46px;width:60px;text-align:center;top:2.65px;font-size:11px;line-height:11px;color:#c9c9c9">84</div><div style="position:absolute;left:353.15px;top:22.5px;width:1px;height:6.5px;background:#2e2e2e"></div><div style="position:absolute;left:365.25px;top:15px;width:1.3px;height:14px;background:#0e0e0e"></div><div style="position:absolute;left:335.85px;width:60px;text-align:center;top:2.65px;font-size:11px;line-height:11px;color:#c9c9c9">90</div><div style="position:absolute;left:377.55px;top:22.5px;width:1px;height:6.5px;background:#2e2e2e"></div><div style="position:absolute;left:389.64px;top:15px;width:1.3px;height:14px;background:#0e0e0e"></div><div style="position:absolute;left:360.24px;width:60px;text-align:center;top:2.65px;font-size:11px;line-height:11px;color:#c9c9c9">96</div><div style="position:absolute;left:401.94px;top:22.5px;width:1px;height:6.5px;background:#2e2e2e"></div><div style="position:absolute;left:414.03px;top:15px;width:1.3px;height:14px;background:#0e0e0e"></div><div style="position:absolute;left:384.63px;width:60px;text-align:center;top:2.65px;font-size:11px;line-height:11px;color:#c9c9c9">102</div><div style="position:absolute;left:426.33px;top:22.5px;width:1px;height:6.5px;background:#2e2e2e"></div><div style="position:absolute;left:438.42px;top:15px;width:1.3px;height:14px;background:#0e0e0e"></div><div style="position:absolute;left:409.02px;width:60px;text-align:center;top:2.65px;font-size:11px;line-height:11px;color:#c9c9c9">108</div><div style="position:absolute;left:450.72px;top:22.5px;width:1px;height:6.5px;background:#2e2e2e"></div><div style="position:absolute;left:462.81px;top:15px;width:1.3px;height:14px;background:#0e0e0e"></div><div style="position:absolute;left:433.41px;width:60px;text-align:center;top:2.65px;font-size:11px;line-height:11px;color:#c9c9c9">114</div><div style="position:absolute;left:475.11px;top:22.5px;width:1px;height:6.5px;background:#2e2e2e"></div><div style="position:absolute;left:487.20px;top:15px;width:1.3px;height:14px;background:#0e0e0e"></div><div style="position:absolute;left:457.80px;width:60px;text-align:center;top:2.65px;font-size:11px;line-height:11px;color:#c9c9c9">120</div><div style="position:absolute;left:499.50px;top:22.5px;width:1px;height:6.5px;background:#2e2e2e"></div><div style="position:absolute;left:511.59px;top:15px;width:1.3px;height:14px;background:#0e0e0e"></div><div style="position:absolute;left:482.19px;width:60px;text-align:center;top:2.65px;font-size:11px;line-height:11px;color:#c9c9c9">126</div><div style="position:absolute;left:523.89px;top:22.5px;width:1px;height:6.5px;background:#2e2e2e"></div><div style="position:absolute;left:535.98px;top:15px;width:1.3px;height:14px;background:#0e0e0e"></div><div style="position:absolute;left:506.58px;width:60px;text-align:center;top:2.65px;font-size:11px;line-height:11px;color:#c9c9c9">132</div><div style="position:absolute;left:548.28px;top:22.5px;width:1px;height:6.5px;background:#2e2e2e"></div><div style="position:absolute;left:560.37px;top:15px;width:1.3px;height:14px;background:#0e0e0e"></div><div style="position:absolute;left:530.97px;width:60px;text-align:center;top:2.65px;font-size:11px;line-height:11px;color:#c9c9c9">138</div><div style="position:absolute;left:572.67px;top:22.5px;width:1px;height:6.5px;background:#2e2e2e"></div><div style="position:absolute;left:584.76px;top:15px;width:1.3px;height:14px;background:#0e0e0e"></div><div style="position:absolute;left:555.36px;width:60px;text-align:center;top:2.65px;font-size:11px;line-height:11px;color:#c9c9c9">144</div><div style="position:absolute;left:597.06px;top:22.5px;width:1px;height:6.5px;background:#2e2e2e"></div><div style="position:absolute;left:609.15px;top:15px;width:1.3px;height:14px;background:#0e0e0e"></div><div style="position:absolute;left:579.75px;width:60px;text-align:center;top:2.65px;font-size:11px;line-height:11px;color:#c9c9c9">150</div><div style="position:absolute;left:621.45px;top:22.5px;width:1px;height:6.5px;background:#2e2e2e"></div><div style="position:absolute;left:633.54px;top:15px;width:1.3px;height:14px;background:#0e0e0e"></div><div style="position:absolute;left:604.14px;width:60px;text-align:center;top:2.65px;font-size:11px;line-height:11px;color:#c9c9c9">156</div><div style="position:absolute;left:645.84px;top:22.5px;width:1px;height:6.5px;background:#2e2e2e"></div><div style="position:absolute;left:657.93px;top:15px;width:1.3px;height:14px;background:#0e0e0e"></div><div style="position:absolute;left:628.53px;width:60px;text-align:center;top:2.65px;font-size:11px;line-height:11px;color:#c9c9c9">162</div><div style="position:absolute;left:670.22px;top:22.5px;width:1px;height:6.5px;background:#2e2e2e"></div><div style="position:absolute;left:682.32px;top:15px;width:1.3px;height:14px;background:#0e0e0e"></div><div style="position:absolute;left:652.92px;width:60px;text-align:center;top:2.65px;font-size:11px;line-height:11px;color:#c9c9c9">168</div><div style="position:absolute;left:694.62px;top:22.5px;width:1px;height:6.5px;background:#2e2e2e"></div><div style="position:absolute;left:706.71px;top:15px;width:1.3px;height:14px;background:#0e0e0e"></div><div style="position:absolute;left:677.31px;width:60px;text-align:center;top:2.65px;font-size:11px;line-height:11px;color:#c9c9c9">174</div><div style="position:absolute;left:719.01px;top:22.5px;width:1px;height:6.5px;background:#2e2e2e"></div><div style="position:absolute;left:731.10px;top:15px;width:1.3px;height:14px;background:#0e0e0e"></div><div style="position:absolute;left:701.70px;width:60px;text-align:center;top:2.65px;font-size:11px;line-height:11px;color:#c9c9c9">180</div><div style="position:absolute;left:743.39px;top:22.5px;width:1px;height:6.5px;background:#2e2e2e"></div><div style="position:absolute;left:755.49px;top:15px;width:1.3px;height:14px;background:#0e0e0e"></div><div style="position:absolute;left:726.09px;width:60px;text-align:center;top:2.65px;font-size:11px;line-height:11px;color:#c9c9c9">186</div><div style="position:absolute;left:767.79px;top:22.5px;width:1px;height:6.5px;background:#2e2e2e"></div><div style="position:absolute;left:779.88px;top:15px;width:1.3px;height:14px;background:#0e0e0e"></div><div style="position:absolute;left:750.48px;width:60px;text-align:center;top:2.65px;font-size:11px;line-height:11px;color:#c9c9c9">192</div><div style="position:absolute;left:792.18px;top:22.5px;width:1px;height:6.5px;background:#2e2e2e"></div><div style="position:absolute;left:804.27px;top:15px;width:1.3px;height:14px;background:#0e0e0e"></div><div style="position:absolute;left:774.87px;width:60px;text-align:center;top:2.65px;font-size:11px;line-height:11px;color:#c9c9c9">198</div><div style="position:absolute;left:816.57px;top:22.5px;width:1px;height:6.5px;background:#2e2e2e"></div><div style="position:absolute;left:828.66px;top:15px;width:1.3px;height:14px;background:#0e0e0e"></div><div style="position:absolute;left:799.26px;width:60px;text-align:center;top:2.65px;font-size:11px;line-height:11px;color:#c9c9c9">204</div><div style="position:absolute;left:840.95px;top:22.5px;width:1px;height:6.5px;background:#2e2e2e"></div></div>
<div style="left:206px;top:591px;width:149px;height:23.5px;border:1px solid #0a0a0a;background:linear-gradient(#4a4a4a,#2b2b2b);"></div>
<div style="left:206px;top:616px;width:149px;height:23.5px;border:1px solid #0a0a0a;background:#4a4a4a;"></div>
<svg style="position:absolute;left:216px;top:596px;" width="16" height="16" viewBox="0 0 16 16"><circle cx="8.5" cy="7.5" r="7.3" fill="#f7e57c"/></svg>
<svg style="position:absolute;left:216px;top:621px;" width="16" height="16" viewBox="0 0 16 16"><circle cx="8.5" cy="7.5" r="7.3" fill="#262626"/></svg>
<div style="left:242.00px;top:599.14px;font-size:12.3px;line-height:12.3px;color:#ffffff;font-family:'Liberation Sans', sans-serif;white-space:pre;letter-spacing:-0.45px">Canal 1</div>
<div style="left:242.00px;top:624.14px;font-size:12.3px;line-height:12.3px;color:#ffffff;font-family:'Liberation Sans', sans-serif;white-space:pre;letter-spacing:-0.45px">Canal 2</div>
<div style="left:357.90px;top:591.4px;width:11.40px;height:23.80px;background:#6ab344;overflow:hidden"><div style="position:absolute;left:4.5px;top:6.32px;font-size:12.3px;line-height:12.3px;color:#1a1a1a;white-space:pre;transform:scaleX(0.88);transform-origin:0 0">.</div></div>
<div style="left:370.70px;top:591.4px;width:12.40px;height:23.80px;background:#cfcfcf;overflow:hidden"><div style="position:absolute;left:4.5px;top:6.32px;font-size:12.3px;line-height:12.3px;color:#1a1a1a;white-space:pre;transform:scaleX(0.88);transform-origin:0 0">.</div></div>
<div style="left:384.60px;top:591.4px;width:48.30px;height:23.80px;background:#cfcfcf;overflow:hidden"><div style="position:absolute;left:4.5px;top:6.32px;font-size:12.3px;line-height:12.3px;color:#1a1a1a;white-space:pre;transform:scaleX(0.88);transform-origin:0 0">DRILL...</div></div>
<div style="left:435.00px;top:591.4px;width:88.00px;height:23.80px;background:#cfcfcf;overflow:hidden"><div style="position:absolute;left:4.5px;top:6.32px;font-size:12.3px;line-height:12.3px;color:#1a1a1a;white-space:pre;transform:scaleX(0.88);transform-origin:0 0">EXTERNAL T...</div></div>
<div style="left:754.60px;top:591.4px;width:64.70px;height:23.80px;background:#6ab344;overflow:hidden"><div style="position:absolute;left:4.5px;top:6.32px;font-size:12.3px;line-height:12.3px;color:#1a1a1a;white-space:pre;transform:scaleX(0.88);transform-origin:0 0">EXTERN...</div></div>
<div style="left:820.70px;top:591.4px;width:102.30px;height:23.80px;background:#6ab344;overflow:hidden"><div style="position:absolute;left:4.5px;top:6.32px;font-size:12.3px;line-height:12.3px;color:#1a1a1a;white-space:pre;transform:scaleX(0.88);transform-origin:0 0">ENGRAVING TO...</div></div>
<div style="left:924.90px;top:591.4px;width:237.30px;height:23.80px;background:#6ab344;overflow:hidden"><div style="position:absolute;left:4.5px;top:6.32px;font-size:12.3px;line-height:12.3px;color:#1a1a1a;white-space:pre;transform:scaleX(0.88);transform-origin:0 0">MILLING SW14</div></div>
<div style="left:1164.40px;top:591.4px;width:1.80px;height:23.80px;background:#6ab344;overflow:hidden"></div>
<div style="left:1177.00px;top:591.4px;width:13.00px;height:23.80px;background:#6ab344;overflow:hidden"></div>
<div style="left:371.00px;top:616.6px;width:27.30px;height:23.60px;background:#6ab344;overflow:hidden"><div style="position:absolute;left:4.5px;top:6.12px;font-size:12.3px;line-height:12.3px;color:#1a1a1a;white-space:pre;transform:scaleX(0.88);transform-origin:0 0">C...</div></div>
<div style="left:399.70px;top:616.6px;width:353.10px;height:23.60px;background:#6ab344;overflow:hidden"><div style="position:absolute;left:4.5px;top:6.12px;font-size:12.3px;line-height:12.3px;color:#1a1a1a;white-space:pre;transform:scaleX(0.88);transform-origin:0 0">DRILLING DIAMETRE 8x24</div></div>
<div style="left:755.00px;top:616.6px;width:29.10px;height:23.60px;background:#cfcfcf;overflow:hidden"><div style="position:absolute;left:4.5px;top:6.12px;font-size:12.3px;line-height:12.3px;color:#1a1a1a;white-space:pre;transform:scaleX(0.88);transform-origin:0 0">F...</div></div>
<div style="left:785.70px;top:616.6px;width:79.30px;height:23.60px;background:#cfcfcf;overflow:hidden"><div style="position:absolute;left:4.5px;top:6.12px;font-size:12.3px;line-height:12.3px;color:#1a1a1a;white-space:pre;transform:scaleX(0.88);transform-origin:0 0">INTERNAL...</div></div>
<div style="left:866.80px;top:616.6px;width:117.60px;height:23.60px;background:#cfcfcf;overflow:hidden"><div style="position:absolute;left:4.5px;top:6.12px;font-size:12.3px;line-height:12.3px;color:#1a1a1a;white-space:pre;transform:scaleX(0.88);transform-origin:0 0">INTERNAL THREA...</div></div>
<div style="left:986.80px;top:616.6px;width:26.50px;height:23.60px;background:#cfcfcf;overflow:hidden"><div style="position:absolute;left:4.5px;top:6.12px;font-size:12.3px;line-height:12.3px;color:#1a1a1a;white-space:pre;transform:scaleX(0.88);transform-origin:0 0">P...</div></div>
<div style="left:1167.00px;top:616.6px;width:4.50px;height:23.60px;background:#6ab344;overflow:hidden"></div>
<div style="left:1173.00px;top:616.6px;width:2.20px;height:23.60px;background:#6ab344;overflow:hidden"></div>
<div style="left:1192.00px;top:616.6px;width:6.00px;height:23.60px;background:#6ab344;overflow:hidden"></div>
<div style="left:369.8px;top:590.8px;width:1.4px;height:83.2px;background:#f0f0f0;"></div>
<div style="left:752.8px;top:590.8px;width:1.4px;height:83.2px;background:#f0f0f0;"></div>
<div style="left:1162.8px;top:590.8px;width:1.4px;height:83.2px;background:#f0f0f0;"></div>
<div style="left:1165.8px;top:590.8px;width:1.4px;height:83.2px;background:#f0f0f0;"></div>
<div style="left:1171.5px;top:590.8px;width:1.4px;height:83.2px;background:#f0f0f0;"></div>
<div style="left:1175.8px;top:590.8px;width:1.4px;height:83.2px;background:#f0f0f0;"></div>
<div style="left:1189.8px;top:590.8px;width:1.4px;height:83.2px;background:#f0f0f0;"></div>
<div style="left:355.3px;top:563px;width:1.6px;height:111px;background:#f4f4f4;"></div>
<div style="left:1197.6px;top:564px;width:1.4px;height:110px;background:#f4f4f4;"></div>
<div style="left:356.6px;top:591.5px;width:1.3px;height:24px;background:#f2e600;"></div>
<svg style="position:absolute;left:355px;top:561px;" width="16" height="27" viewBox="0 0 16 27"><path d="M1.5 2.3 L13.2 9.3 L1.5 16.2 Z" fill="#5fb040" stroke="#f0f0f0" stroke-width="1.1" stroke-linejoin="miter"/><path d="M1.3 16.9 L6.6 16.9 L1.3 24.8 Z" fill="#f5e600"/></svg>
<svg style="position:absolute;left:1186px;top:562px;" width="14" height="16" viewBox="0 0 14 16"><path d="M13.5 1.5 L2 8 L13.5 14.5 Z" fill="#ff0000"/></svg>
<svg style="position:absolute;left:214px;top:677px;" width="20" height="20" viewBox="0 0 20 20"><circle cx="9.5" cy="9.5" r="7.6" fill="#ececec"/><path d="M4.8 9.5 H14.2" stroke="#232323" stroke-width="1.7"/></svg>
<div style="left:237px;top:677.7px;width:8.2px;height:16px;border-radius:2px;background:#8a8a8a"></div>
<div style="left:245px;top:684px;width:81px;height:3.2px;background:#9a9a9a;"></div>
<svg style="position:absolute;left:329px;top:677px;" width="20" height="20" viewBox="0 0 20 20"><circle cx="9.5" cy="9.5" r="7.6" fill="#ececec"/><path d="M4.8 9.5 H14.2 M9.5 4.8 V14.2" stroke="#232323" stroke-width="1.7"/></svg>
<svg style="position:absolute;left:360px;top:679px;" width="10" height="14" viewBox="0 0 10 14"><path d="M8.4 1.7 L1.7 7 L8.4 12.3 Z" fill="#555555"/></svg>
<svg style="position:absolute;left:785px;top:679px;" width="10" height="14" viewBox="0 0 10 14"><path d="M1.7 1.7 L8 6.8 L1.7 11.8 Z" fill="#555555"/></svg>
<svg style="position:absolute;left:798px;top:678px;" width="20" height="17" viewBox="0 0 20 17"><path d="M1 1 H18 L9.5 15.3 Z" fill="#ffff00"/></svg>
<div style="left:825.50px;top:681.63px;font-size:12.2px;line-height:12.2px;color:#ffffff;font-family:'Liberation Sans', sans-serif;white-space:pre;letter-spacing:-0.22px">0.00s</div>
<div style="left:876px;top:679px;width:1.3px;height:15.7px;background:#9a9a9a;"></div>
<div style="left:885.50px;top:681.63px;font-size:12.2px;line-height:12.2px;color:#ffffff;font-family:'Liberation Sans', sans-serif;white-space:pre;letter-spacing:-0.17px">Temps de pièce :</div>
<div style="left:984px;top:674px;width:50px;height:25px;background:#c9c9c9"></div>
<div style="left:988.60px;top:680.63px;font-size:12.2px;line-height:12.2px;color:#1e1e1e;font-family:'Liberation Sans', sans-serif;white-space:pre;letter-spacing:-0.3px">207.42s</div>
<div style="left:1054px;top:674px;width:61px;height:25px;background:#c9c9c9"></div>
<div style="left:1058.60px;top:680.63px;font-size:12.2px;line-height:12.2px;color:#1e1e1e;font-family:'Liberation Sans', sans-serif;white-space:pre;letter-spacing:0.08px">0.3 p/min</div>
<div style="left:1135px;top:674px;width:54px;height:25px;background:#c9c9c9"></div>
<div style="left:1139.40px;top:680.63px;font-size:12.2px;line-height:12.2px;color:#1e1e1e;font-family:'Liberation Sans', sans-serif;white-space:pre;letter-spacing:0.0px">17.4 p/h</div>
<div style="left:1199px;top:0px;width:1px;height:700px;background:#232323;"></div>
</body></html>
